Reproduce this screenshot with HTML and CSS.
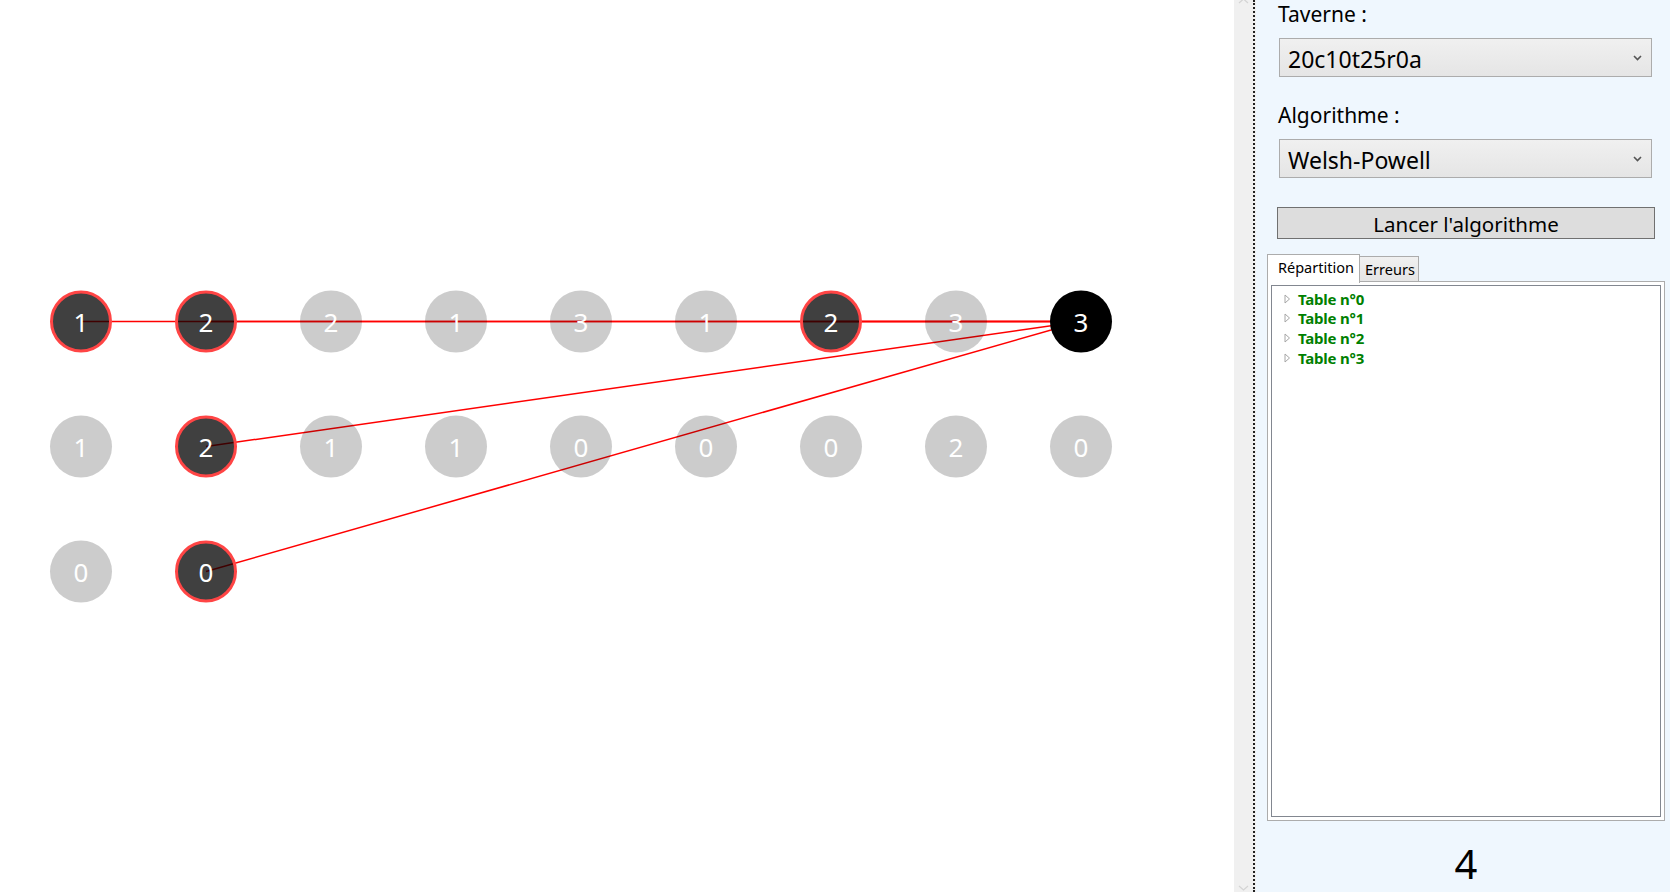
FILE: index.html
```html
<!DOCTYPE html>
<html lang="fr">
<head>
<meta charset="utf-8">
<title>Taverne</title>
<link rel="stylesheet" href="styles.css">
</head>
<body>
<div class="app">
  <div class="canvas">
    <svg class="graph" width="1234" height="892" viewBox="0 0 1234 892">
      <g class="edges">
        <line x1="81" y1="321.5" x2="1081" y2="321.5"/>
        <line x1="206" y1="321.5" x2="1081" y2="321.5"/>
        <line x1="831" y1="321.5" x2="1081" y2="321.5"/>
        <line x1="206" y1="446.5" x2="1081" y2="321.5"/>
        <line x1="206" y1="571.5" x2="1081" y2="321.5"/>
      </g>
      <g class="nodes">
        <circle class="n-red" cx="81" cy="321.5" r="29.5"/><text x="81" y="331.5">1</text>
        <circle class="n-red" cx="206" cy="321.5" r="29.5"/><text x="206" y="331.5">2</text>
        <circle class="n-gray" cx="331" cy="321.5" r="31"/><text x="331" y="331.5">2</text>
        <circle class="n-gray" cx="456" cy="321.5" r="31"/><text x="456" y="331.5">1</text>
        <circle class="n-gray" cx="581" cy="321.5" r="31"/><text x="581" y="331.5">3</text>
        <circle class="n-gray" cx="706" cy="321.5" r="31"/><text x="706" y="331.5">1</text>
        <circle class="n-red" cx="831" cy="321.5" r="29.5"/><text x="831" y="331.5">2</text>
        <circle class="n-gray" cx="956" cy="321.5" r="31"/><text x="956" y="331.5">3</text>
        <circle class="n-black" cx="1081" cy="321.5" r="31"/><text x="1081" y="331.5">3</text>

        <circle class="n-gray" cx="81" cy="446.5" r="31"/><text x="81" y="456.5">1</text>
        <circle class="n-red" cx="206" cy="446.5" r="29.5"/><text x="206" y="456.5">2</text>
        <circle class="n-gray" cx="331" cy="446.5" r="31"/><text x="331" y="456.5">1</text>
        <circle class="n-gray" cx="456" cy="446.5" r="31"/><text x="456" y="456.5">1</text>
        <circle class="n-gray" cx="581" cy="446.5" r="31"/><text x="581" y="456.5">0</text>
        <circle class="n-gray" cx="706" cy="446.5" r="31"/><text x="706" y="456.5">0</text>
        <circle class="n-gray" cx="831" cy="446.5" r="31"/><text x="831" y="456.5">0</text>
        <circle class="n-gray" cx="956" cy="446.5" r="31"/><text x="956" y="456.5">2</text>
        <circle class="n-gray" cx="1081" cy="446.5" r="31"/><text x="1081" y="456.5">0</text>

        <circle class="n-gray" cx="81" cy="571.5" r="31"/><text x="81" y="581.5">0</text>
        <circle class="n-red" cx="206" cy="571.5" r="29.5"/><text x="206" y="581.5">0</text>
      </g>
    </svg>
  </div>
  <div class="scrollbar">
    <svg class="sb-arrow sb-up" width="19" height="8" viewBox="0 0 19 8"><path d="M5 4 L9.5 0 L14 4"/></svg>
    <svg class="sb-arrow sb-down" width="19" height="8" viewBox="0 0 19 8"><path d="M5 2 L9.5 6 L14 2"/></svg>
  </div>
  <div class="splitter"></div>
  <div class="panel">
    <div class="label">Taverne :</div>
    <div class="combo">
      <span class="combo-text">20c10t25r0a</span>
      <svg class="chev" width="9" height="6" viewBox="0 0 9 6"><path d="M1 1 L4.5 4.5 L8 1"/></svg>
    </div>
    <div class="label label-2">Algorithme :</div>
    <div class="combo">
      <span class="combo-text">Welsh-Powell</span>
      <svg class="chev" width="9" height="6" viewBox="0 0 9 6"><path d="M1 1 L4.5 4.5 L8 1"/></svg>
    </div>
    <div class="button">Lancer l'algorithme</div>
    <div class="tabs">
      <div class="tab-strip">
        <div class="tab tab-active">Répartition</div>
        <div class="tab tab-second">Erreurs</div>
      </div>
      <div class="tab-body">
        <div class="tree">
          <div class="tree-item"><svg class="expander" width="7" height="10" viewBox="0 0 7 10"><path d="M1 1 L5.5 5 L1 9 Z"/></svg><span>Table n°0</span></div>
          <div class="tree-item"><svg class="expander" width="7" height="10" viewBox="0 0 7 10"><path d="M1 1 L5.5 5 L1 9 Z"/></svg><span>Table n°1</span></div>
          <div class="tree-item"><svg class="expander" width="7" height="10" viewBox="0 0 7 10"><path d="M1 1 L5.5 5 L1 9 Z"/></svg><span>Table n°2</span></div>
          <div class="tree-item"><svg class="expander" width="7" height="10" viewBox="0 0 7 10"><path d="M1 1 L5.5 5 L1 9 Z"/></svg><span>Table n°3</span></div>
        </div>
      </div>
    </div>
    <div class="count">4</div>
  </div>
</div>
</body>
</html>
```

FILE: styles.css
```css
html, body {
  margin: 0;
  padding: 0;
  width: 1670px;
  height: 892px;
  overflow: hidden;
  background: #ffffff;
  font-family: "Noto Sans", "Open Sans", sans-serif;
}

.app {
  display: flex;
  width: 1670px;
  height: 892px;
}

.canvas {
  width: 1234px;
  height: 892px;
  background: #ffffff;
  flex: none;
}

.graph {
  display: block;
}

.edges line {
  stroke: #ff0000;
  stroke-width: 1.5;
}

.nodes text {
  fill: #ffffff;
  font-family: "Noto Sans", "Open Sans", sans-serif;
  font-size: 26px;
  text-anchor: middle;
}

.n-red {
  fill: rgba(0, 0, 0, 0.75);
  stroke: #ff4545;
  stroke-width: 3;
}

.n-gray {
  fill: rgba(0, 0, 0, 0.2);
}

.n-black {
  fill: #000000;
}

.scrollbar {
  width: 19px;
  height: 892px;
  background: #f0f0f0;
  flex: none;
  display: flex;
  flex-direction: column;
  justify-content: space-between;
}

.sb-arrow {
  display: block;
}

.sb-arrow path {
  fill: none;
  stroke: #d4d4d4;
  stroke-width: 1.2;
}

.sb-up {
  margin-top: -1px;
}

.splitter {
  width: 3px;
  height: 892px;
  flex: none;
  box-sizing: border-box;
  border-left: 2px dotted #202020;
  background: #f0f0f0;
}

.panel {
  flex: 1;
  background: #eff7fe;
  display: flex;
  flex-direction: column;
  color: #000000;
  height: 892px;
}

.label {
  font-size: 21px;
  line-height: 26px;
  margin: 1px 0 0 22px;
}

.label-2 {
  margin-top: 25px;
}

.combo {
  margin: 11px 0 0 23px;
  width: 373px;
  height: 39px;
  box-sizing: border-box;
  border: 1px solid #acacac;
  background: linear-gradient(#f0f0f0, #e5e5e5);
  display: flex;
  align-items: flex-start;
  justify-content: space-between;
  padding: 3px 9px 0 8px;
}

.combo-text {
  font-size: 23px;
  line-height: 34px;
  white-space: nowrap;
}

.chev {
  align-self: center;
  margin-top: -3px;
}

.chev path {
  fill: none;
  stroke: #555555;
  stroke-width: 1.6;
}

.button {
  margin: 29px 0 0 21px;
  width: 378px;
  height: 32px;
  box-sizing: border-box;
  border: 1px solid #707070;
  background: #dddddd;
  font-size: 20.5px;
  line-height: 27px;
  padding-top: 3px;
  text-align: center;
}

.tabs {
  margin: 15px 0 0 11px;
  width: 398px;
  display: flex;
  flex-direction: column;
}

.tab-strip {
  display: flex;
  align-items: flex-end;
  height: 27px;
  position: relative;
  z-index: 1;
}

.tab {
  box-sizing: border-box;
  height: 25px;
  border: 1px solid #acacac;
  border-bottom: none;
  background: linear-gradient(#f0f0f0, #e5e5e5);
  font-size: 14.5px;
  line-height: 24px;
  padding: 0 5px;
}

.tab-active {
  width: 93px;
  height: 29px;
  margin-bottom: -2px;
  background: #ffffff;
  padding: 0 9px 0 10px;
  line-height: 25px;
}

.tab-second {
  width: 60px;
  margin-left: -1px;
}

.tab-body {
  box-sizing: border-box;
  height: 540px;
  border: 1px solid #acacac;
  background: #ffffff;
  padding: 3px;
}

.tree {
  box-sizing: border-box;
  height: 100%;
  border: 1px solid #828790;
  background: #ffffff;
  padding: 3px 0 0 12px;
}

.tree-item {
  display: flex;
  align-items: center;
  height: 19.6px;
  font-size: 15px;
  font-weight: bold;
  color: #008000;
  letter-spacing: -0.2px;
}

.expander {
  margin-right: 7px;
}

.expander path {
  fill: none;
  stroke: #a6a6a6;
  stroke-width: 1;
}

.count {
  text-align: center;
  font-size: 40px;
  line-height: 50px;
  margin-top: 18px;
  padding-left: 6px;
}
```
